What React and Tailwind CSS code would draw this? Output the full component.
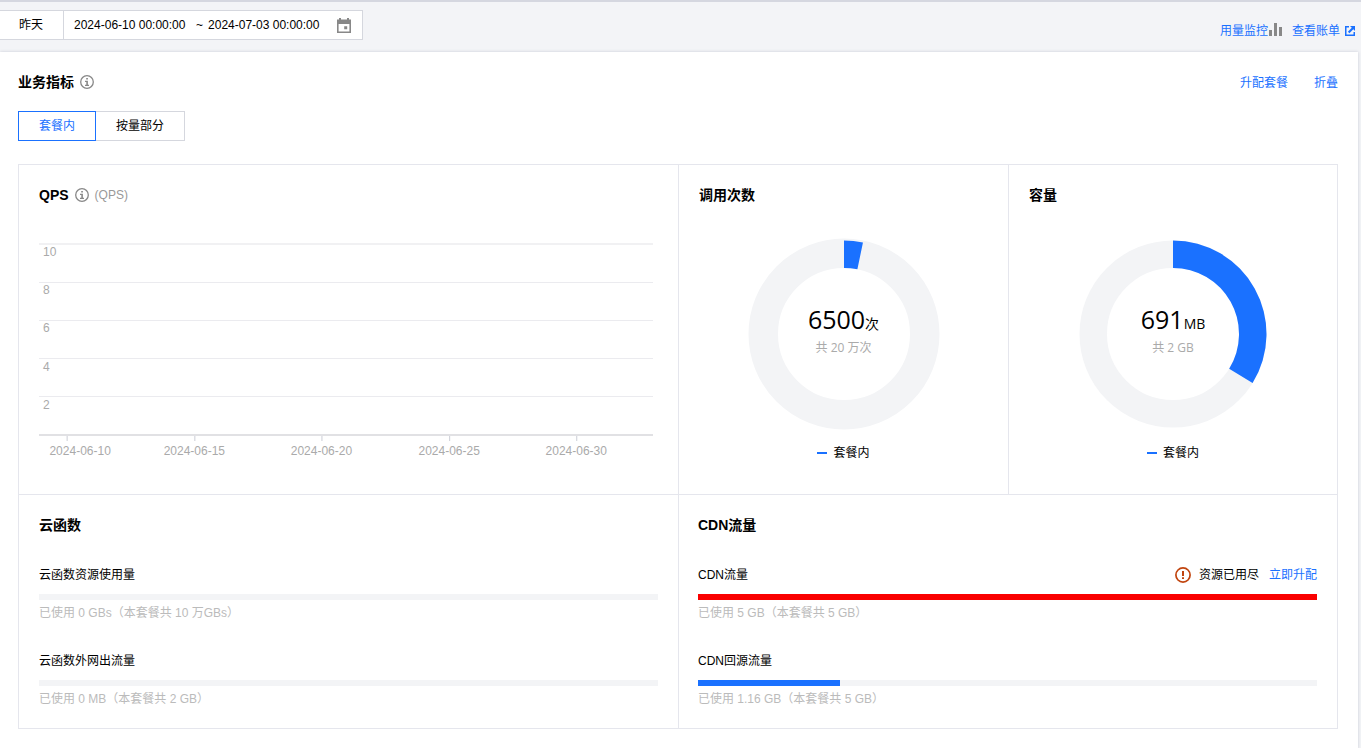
import { useState } from "react";

const InfoIcon = () => (
  <svg width="14" height="14" viewBox="0 0 14 14" fill="none" className="shrink-0">
    <circle cx="7" cy="7" r="6.3" stroke="#888" strokeWidth="1.3" />
    <path d="M6.2 3h1.7v1.6H6.2zM5 5.8h2.9v3.9H9v1.2H5V9.7h1.3V7H5z" fill="#888" />
  </svg>
);

const CalendarIcon = () => (
  <svg width="14" height="15" viewBox="0 0 14 15">
    <path
      fillRule="evenodd"
      fill="#888"
      d="M0 1.5h2V0h2v1.5h6V0h2v1.5h2V15H0zM1.6 6v7.4h10.8V6zM7.2 8.2h3v3h-3z"
    />
  </svg>
);

const BarsIcon = () => (
  <svg width="13" height="13" viewBox="0 0 13 13" fill="#888" className="mt-0.5 ml-px">
    <path d="M0 7h3v6H0zM5 0h3v13H5zM10 4h3v9h-3z" />
  </svg>
);

const JumpIcon = () => (
  <svg width="10" height="10" viewBox="0 0 10 10" fill="#1a71ff">
    <path d="M0 0h4v1.5H1.5v7h7V6H10v4H0z" />
    <path d="M5 0h5v5L8.3 3.3 4.4 7.2 2.9 5.7l3.9-3.9z" />
  </svg>
);

const WarnIcon = () => (
  <svg width="16" height="16" viewBox="0 0 16 16" fill="none">
    <circle cx="8" cy="8" r="7.1" stroke="#c1440e" strokeWidth="1.7" />
    <path d="M7 4h2v5H7zM7 10.3h2v1.7H7z" fill="#c1440e" />
  </svg>
);

const yLabels = ["10", "8", "6", "4", "2"];
const xLabels = [
  { text: "2024-06-10", tick: "4.5%", label: "6.7%" },
  { text: "2024-06-15", tick: "25.3%", label: "25.3%" },
  { text: "2024-06-20", tick: "46%", label: "46%" },
  { text: "2024-06-25", tick: "66.8%", label: "66.8%" },
  { text: "2024-06-30", tick: "87.5%", label: "87.5%" },
];

const QpsChart = () => (
  <svg className="block w-full h-[220px] text-xs" fill="#aaa">
    {yLabels.map((y, i) => (
      <g key={y}>
        <rect
          x="0"
          y={i === 0 ? 1 : 2 + i * 38}
          width="100%"
          height={i === 0 ? 2 : 1}
          fill={i === 0 ? "#f1f1f3" : "#ebebef"}
        />
        <text x="4" y={14 + Math.round(i * 38.2)}>
          {y}
        </text>
      </g>
    ))}
    <rect x="0" y="192" width="100%" height="2" fill="#e1e1e4" />
    {xLabels.map((x) => (
      <g key={x.text}>
        <rect x={x.tick} y="194" width="1" height="5" fill="#ccced6" />
        <text x={x.label} y="213" textAnchor="middle">
          {x.text}
        </text>
      </g>
    ))}
  </svg>
);

const Donut = ({ title, value, unit, total, percent, outer }) => {
  // both rings share the same 66px hole
  const angle = (percent / 100) * 2 * Math.PI;
  const at = (r) => `${96 + r * Math.sin(angle)} ${96 - r * Math.cos(angle)}`;
  const arc = `M96 2.5A93.5 93.5 0 0 1 ${at(93.5)}L${at(66)}A66 66 0 0 0 96 30Z`;

  return (
    <section className="border-l border-[#e5e6ed] px-5 pt-5 first:border-l-0">
      <h3 className="text-sm leading-5 font-bold">{title}</h3>
      <div className="mt-[33px] flex flex-col items-center">
        <div className="grid place-items-center">
          <svg width="192" height="192" viewBox="0 0 192 192" className="col-start-1 row-start-1">
            <circle
              cx="96"
              cy="96"
              r={(outer + 66) / 2}
              fill="none"
              stroke="#f3f4f6"
              strokeWidth={outer - 66}
            />
            <path d={arc} fill="#1a71ff" />
          </svg>
          <div className="col-start-1 row-start-1 pb-1.5 text-center font-['Open_Sans','Noto_Sans_CJK_SC',sans-serif]">
            <p className="text-[25px] leading-7">
              {value}
              <span className="text-sm leading-7">{unit}</span>
            </p>
            <p className="text-xs leading-5 text-[#aaa]">{total}</p>
          </div>
        </div>
        <div className="mt-[13px] flex items-center gap-1.5 text-xs leading-5">
          <span className="h-0.5 w-2.5 bg-[#1a71ff]"></span>
          套餐内
        </div>
      </div>
    </section>
  );
};

const Usage = ({ name, used, percent, full }) => (
  <div>
    <div className="flex items-center justify-between leading-5">
      <span>{name}</span>
      {full && (
        <div className="flex items-center">
          <WarnIcon />
          <span className="ml-2">资源已用尽</span>
          <a href="#upgrade" className="ml-2.5 text-[#1a71ff]">
            立即升配
          </a>
        </div>
      )}
    </div>
    <div
      role="progressbar"
      aria-label={name}
      aria-valuenow={percent}
      className="mt-[9px] h-1.5 bg-[#f3f4f6]"
    >
      <div
        className={full ? "h-full bg-[#fa0000]" : "h-full bg-[#1a71ff]"}
        style={{ width: `${percent}%` }}
      ></div>
    </div>
    <p className="mt-[3px] leading-5 text-[#bbb]">{used}</p>
  </div>
);

const App = () => {
  const [tab, setTab] = useState("in");
  const [start, setStart] = useState("2024-06-10 00:00:00");
  const [end, setEnd] = useState("2024-07-03 00:00:00");

  const active = "relative z-10 border-[#1a71ff] text-[#1a71ff]";
  const normal = "border-[#d5d7de]";

  return (
    <div className="flex min-h-screen flex-col border-t-2 border-[#d5d7e0] bg-[#f3f4f7] font-['Liberation_Sans','Noto_Sans_CJK_SC',sans-serif] text-xs text-black">
      <header className="flex h-[50px] items-start justify-between pt-2">
        <div className="flex h-[30px] items-center border border-l-0 border-[#d5d7de] bg-white">
          <button className="h-full border-r border-[#d5d7de] pr-5 pl-[19px]">昨天</button>
          <input
            aria-label="开始时间"
            value={start}
            onChange={(e) => setStart(e.target.value)}
            className="ml-2.5 w-[122px] outline-none"
          />
          <span>~</span>
          <input
            aria-label="结束时间"
            value={end}
            onChange={(e) => setEnd(e.target.value)}
            className="ml-[5px] w-[129px] outline-none"
          />
          <button aria-label="选择日期" className="mr-[11px]">
            <CalendarIcon />
          </button>
        </div>
        <nav className="flex items-start gap-2.5 pt-[11px] pr-1.5 leading-5 text-[#1a71ff]">
          <a href="#monitor" className="flex items-start">
            用量监控
            <BarsIcon />
          </a>
          <a href="#bill" className="flex items-center gap-[5px]">
            查看账单
            <JumpIcon />
          </a>
        </nav>
      </header>

      <main className="mr-[3px] grow bg-white pt-5 pr-5 pb-5 pl-[18px] shadow-[0_0_3px_#c8cad4]">
        <div className="flex items-start justify-between leading-5">
          <h2 className="flex items-center gap-1.5 text-sm leading-5 font-bold">
            业务指标
            <InfoIcon />
          </h2>
          <div className="flex gap-[26px] pt-px text-[#1a71ff]">
            <a href="#upgrade">升配套餐</a>
            <button>折叠</button>
          </div>
        </div>

        <div className="mt-[18px] flex">
          <button
            onClick={() => setTab("in")}
            className={`h-[30px] border px-5 ${tab === "in" ? active : normal}`}
          >
            套餐内
          </button>
          <button
            onClick={() => setTab("out")}
            className={`-ml-px h-[30px] border px-5 ${tab === "out" ? active : normal}`}
          >
            按量部分
          </button>
        </div>

        <div className="mt-[23px] border border-[#e5e6ed]">
          <div className="grid grid-cols-2">
            <section className="px-5 pt-5 pb-8">
              <div className="flex items-center gap-1.5 leading-5">
                <h3 className="text-sm font-bold">QPS</h3>
                <InfoIcon />
                <span className="text-[#999]">(QPS)</span>
              </div>
              <div className="mt-[37px] pr-[5px]">
                <QpsChart />
              </div>
            </section>
            <div className="grid grid-cols-2 border-l border-[#e5e6ed]">
              <Donut title="调用次数" value="6500" unit="次" total="共 20 万次" percent={3.25} outer={95.5} />
              <Donut title="容量" value="691" unit="MB" total="共 2 GB" percent={33.8} outer={93.5} />
            </div>
          </div>

          <div className="grid grid-cols-2 border-t border-[#e5e6ed]">
            <section className="flex flex-col gap-7 px-5 pt-5 pb-[19px]">
              <h3 className="pb-0.5 text-sm leading-5 font-bold">云函数</h3>
              <Usage name="云函数资源使用量" used="已使用 0 GBs（本套餐共 10 万GBs）" percent={0} />
              <Usage name="云函数外网出流量" used="已使用 0 MB（本套餐共 2 GB）" percent={0} />
            </section>
            <section className="flex flex-col gap-7 border-l border-[#e5e6ed] pt-5 pr-5 pb-[19px] pl-[19px]">
              <h3 className="pb-0.5 text-sm leading-5 font-bold">CDN流量</h3>
              <Usage name="CDN流量" used="已使用 5 GB（本套餐共 5 GB）" percent={100} full />
              <Usage name="CDN回源流量" used="已使用 1.16 GB（本套餐共 5 GB）" percent={23} />
            </section>
          </div>
        </div>
      </main>
    </div>
  );
};

export default App;
